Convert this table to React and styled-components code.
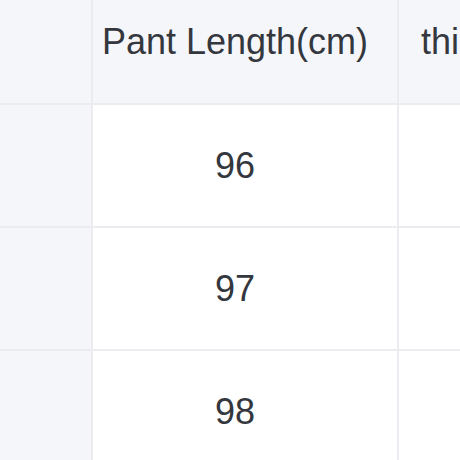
import React from 'react'
import styled, { createGlobalStyle } from 'styled-components'

const GlobalStyle = createGlobalStyle`
html, body {
  margin: 0;
  padding: 0;
  background: #ffffff;
  overflow: hidden;
}
body {
  width: 460px;
  height: 460px;
  font-family: "Liberation Sans", Arial, sans-serif;
}
`

const Viewport = styled.div`
width: 460px;
height: 460px;
overflow: hidden;
`

const Table = styled.div`
display: grid;
grid-template-columns: 93px 306px 216px;
grid-template-rows: 124px repeat(3, 123px);
margin-top: -19px;
width: max-content;
`

const Cell = styled.div`
display: flex;
align-items: center;
justify-content: center;
box-sizing: border-box;
padding-right: ${p => (p.$side ? '0' : '20px')};
border-right: 2px solid #ececf0;
border-bottom: 2px solid #ececf0;
background: ${p => (p.$head ? '#f5f6f9' : '#ffffff')};
color: #34373d;
font-size: 36px;
white-space: nowrap;
`

const rows = ['96', '97', '98']

const App = () => {
  return (
    <Viewport>
      <GlobalStyle />
      <Table>
        <Cell $head $side />
        <Cell $head>Pant Length(cm)</Cell>
        <Cell $head>thigh(cm)</Cell>
        {rows.map(v => (
          <React.Fragment key={v}>
            <Cell $head $side />
            <Cell>{v}</Cell>
            <Cell />
          </React.Fragment>
        ))}
      </Table>
    </Viewport>
  )
}

export default App
